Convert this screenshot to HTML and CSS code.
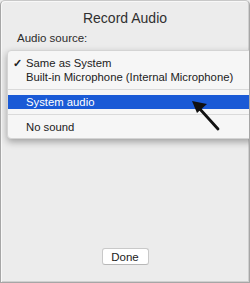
FILE: index.html
```html
<!DOCTYPE html>
<html lang="en">
<head>
  <meta charset="UTF-8">
  <title>Record Audio</title>
  <link rel="stylesheet" href="styles.css">
</head>
<body>
  <div class="window">
    <h1 class="title">Record Audio</h1>
    <div class="field-label">Audio source:</div>
    <div class="spacer"></div>
    <div class="actions">
      <button class="btn">Done</button>
    </div>

    <ul class="menu">
      <li class="item"><span class="check">✓</span>Same as System</li>
      <li class="item"><span class="check"></span>Built-in Microphone (Internal Microphone)</li>
      <li class="sep"></li>
      <li class="item selected"><span class="check"></span>System audio</li>
      <li class="sep"></li>
      <li class="item"><span class="check"></span>No sound</li>
    </ul>

    <svg class="pointer" width="40" height="40" viewBox="0 0 40 40">
      <line x1="14" y1="13" x2="33" y2="34" stroke="#111" stroke-width="2.8" stroke-linecap="round"/>
      <polygon points="7,6 12,18 22,9" fill="#111"/>
    </svg>
  </div>
</body>
</html>
```

FILE: styles.css
```css
html, body {
  margin: 0;
  padding: 0;
}

body {
  font-family: "Liberation Sans", Arial, sans-serif;
  background: #ececec;
  color: #2b2b2b;
}

.window {
  position: relative;
  box-sizing: border-box;
  width: 250px;
  height: 283px;
  display: flex;
  flex-direction: column;
  background: #ececec;
  border: 1px solid #a6a6a6;
  border-top-color: #c8c8c8;
  border-radius: 5px 5px 0 0;
  box-shadow: inset 1px 1px 0 #f8f8f8, inset -1px -1px 0 #d0d0d0;
  overflow: hidden;
}

.title {
  margin: 9px 0 0;
  font-size: 14px;
  font-weight: normal;
  line-height: 16px;
  text-align: center;
  color: #303030;
}

.field-label {
  margin: 5px 0 0 16px;
  font-size: 11.5px;
  line-height: 14px;
  color: #2b2b2b;
}

.spacer {
  flex: 1;
}

.actions {
  display: flex;
  justify-content: center;
  padding-bottom: 17px;
}

.btn {
  width: 47px;
  height: 17px;
  padding: 0;
  font-family: "Liberation Sans", Arial, sans-serif;
  font-size: 11.5px;
  color: #222;
  background: #fff;
  border: 1px solid #c9c9c9;
  border-bottom-color: #b8b8b8;
  border-radius: 3px;
}

.menu {
  position: absolute;
  left: 6px;
  right: -6px;
  top: 49px;
  margin: 0;
  padding: 5px 0 4px;
  list-style: none;
  background: #f6f6f6;
  border: 1px solid #d4d4d4;
  border-radius: 4px;
  box-shadow: 0 3px 7px rgba(0, 0, 0, 0.32);
  font-size: 11.3px;
}

.item {
  display: flex;
  align-items: center;
  height: 14px;
  padding-left: 5px;
  color: #222;
  white-space: nowrap;
}

.check {
  width: 13px;
  font-size: 11px;
  font-weight: bold;
}

.item.selected {
  background: #1a5ad6;
  color: #fff;
}

.sep {
  height: 1px;
  margin: 5px 0;
  background: #dadada;
}

.pointer {
  position: absolute;
  left: 184px;
  top: 94px;
}
```
